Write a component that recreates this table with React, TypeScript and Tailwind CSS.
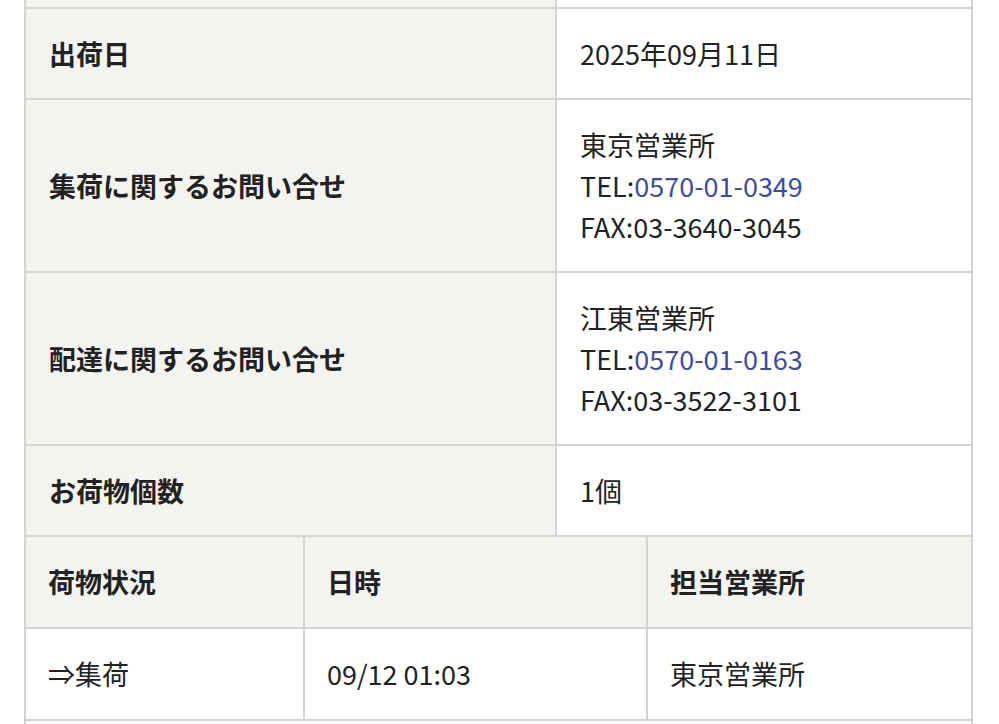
import React from 'react'

const FONT = "font-['Noto_Sans_CJK_JP','Noto_Sans',sans-serif]"

type InfoRow = { label: string; lines: React.ReactNode[] }

const infoRows: InfoRow[] = [
  { label: '出荷日', lines: ['2025年09月11日'] },
  {
    label: '集荷に関するお問い合せ',
    lines: [
      '東京営業所',
      <>TEL:<a href="#" className="text-[#3f4c9c]">0570-01-0349</a></>,
      'FAX:03-3640-3045',
    ],
  },
  {
    label: '配達に関するお問い合せ',
    lines: [
      '江東営業所',
      <>TEL:<a href="#" className="text-[#3f4c9c]">0570-01-0163</a></>,
      'FAX:03-3522-3101',
    ],
  },
  { label: 'お荷物個数', lines: ['1個'] },
]

const history = [{ status: '⇒集荷', date: '09/12 01:03', office: '東京営業所' }]

export default function App() {
  return (
    <div className={`h-[724px] overflow-hidden bg-white text-[#222] text-[27px] leading-[41px] ${FONT}`}>
      <div className="ml-6 w-[949px] border-x-2 border-[#d3d3d3]">

        {/* top of the previous row, cut off */}
        <div className="flex h-[9px] border-b-2 border-[#d3d3d3]">
          <div className="w-[531px] border-r-2 border-[#d3d3d3] bg-[#f3f3f0]" />
          <div className="flex-1" />
        </div>

        {/* shipment info */}
        {infoRows.map((row) => (
          <div key={row.label} className="flex border-b-2 border-[#d3d3d3]">
            <div className="w-[531px] border-r-2 border-[#d3d3d3] bg-[#f3f3f0] px-[23px] py-6 flex items-center font-bold">
              {row.label}
            </div>
            <div className="flex-1 px-[23px] py-6">
              {row.lines.map((line, i) => (
                <div key={i}>{line}</div>
              ))}
            </div>
          </div>
        ))}

        {/* tracking header */}
        <div className="flex border-b-2 border-[#d3d3d3] bg-[#f3f3f0] font-bold">
          <div className="w-[279px] border-r-2 border-[#d3d3d3] px-[22px] pt-6 pb-[25px]">荷物状況</div>
          <div className="w-[343px] border-r-2 border-[#d3d3d3] px-[22px] pt-6 pb-[25px]">日時</div>
          <div className="flex-1 px-[22px] pt-6 pb-[25px]">担当営業所</div>
        </div>

        {history.map((h) => (
          <div key={h.date} className="flex border-b-2 border-[#d3d3d3]">
            <div className="w-[279px] border-r-2 border-[#d3d3d3] px-[22px] pt-6 pb-[25px]">{h.status}</div>
            <div className="w-[343px] border-r-2 border-[#d3d3d3] px-[22px] pt-6 pb-[25px]">{h.date}</div>
            <div className="flex-1 px-[22px] pt-6 pb-[25px]">{h.office}</div>
          </div>
        ))}

        <div className="h-[40px]" />
      </div>
    </div>
  )
}
